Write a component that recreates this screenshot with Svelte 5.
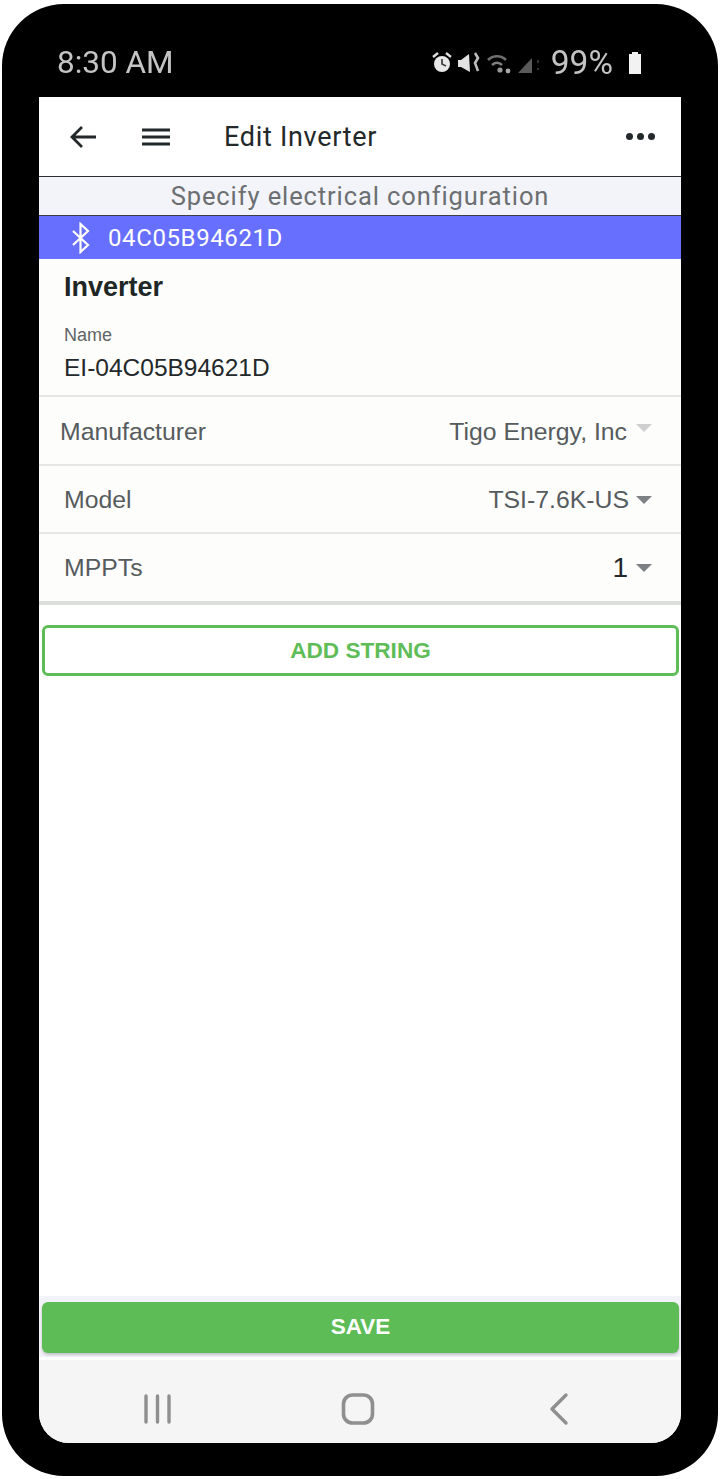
<script>
  const rows = [
    { label: 'Manufacturer', value: 'Tigo Energy, Inc', cls: 'maker' },
    { label: 'Model', value: 'TSI-7.6K-US', cls: 'model' },
    { label: 'MPPTs', value: '1', cls: 'mppts' }
  ];
</script>

<div class="phone">
  <div class="status">
    <span class="time">8:30 AM</span>
    <div class="status-right">
      <svg class="sicons" width="108" height="26" viewBox="0 0 108 26">
        <!-- alarm -->
        <circle cx="10" cy="14" r="8" fill="#e8e8e8" />
        <path d="M10 9v5l4 2" stroke="#444" stroke-width="1.800" fill="none" />
        <path d="M1 7l5-4M19 7l-5-4" stroke="#ddd" stroke-width="2.400" />
        <!-- mute -->
        <path d="M26 10h3l8-6 1 18-9-5h-3z" fill="#e2e2e2" />
        <path d="M43 3l3 5-3 5 3 8" stroke="#bbb" stroke-width="2.600" fill="none" />
        <!-- wifi -->
        <path d="M56 10c5-5 13-5 18 0" stroke="#6e6e6e" stroke-width="2.600" fill="none" />
        <path d="M60 15c3-3 7-3 10 0" stroke="#808080" stroke-width="2.600" fill="none" />
        <circle cx="68" cy="20" r="2.600" fill="#999" />
        <circle cx="76" cy="21" r="2.400" fill="#a8a8a8" />
        <!-- signal -->
        <path d="M86 23l14-15v15z" fill="#5a5a5a" />
        <path d="M106 10v3M106 18v2" stroke="#333" stroke-width="2" />
      </svg>
      <span class="pct">99%</span>
      <svg class="batt" width="16" height="24" viewBox="0 0 16 24">
        <path d="M5 1h6v2h3v20H2V3h3z" fill="#f2f2f2" />
      </svg>
    </div>
  </div>

  <div class="screen">
    <header class="topbar">
      <svg class="back" width="30" height="26" viewBox="0 0 30 26">
        <path d="M28 13H4M14 3L4 13l10 10" stroke="#23282a" stroke-width="2.800" fill="none" />
      </svg>
      <svg class="menu" width="30" height="20" viewBox="0 0 30 20">
        <path d="M1 3h28M1 10h28M1 17h28" stroke="#23282a" stroke-width="2.800" />
      </svg>
      <span class="title">Edit Inverter</span>
      <div class="dots"><i></i><i></i><i></i></div>
    </header>

    <div class="subtitle">Specify electrical configuration</div>

    <div class="device">
      <svg width="20" height="32" viewBox="0 0 20 32">
        <path d="M2 9l15 14-7.500 7V2L17 9 2 23" stroke="#fff" stroke-width="2.200" fill="none" />
      </svg>
      <span>04C05B94621D</span>
    </div>

    <section class="inverter">
      <h2>Inverter</h2>
      <div class="name-label">Name</div>
      <div class="name-value">EI-04C05B94621D</div>
    </section>

    {#each rows as row}
      <div class="row {row.cls}">
        <span class="row-label">{row.label}</span>
        <span class="row-value">{row.value}</span>
        <span class="caret"></span>
      </div>
    {/each}

    <div class="body">
      <button class="add">ADD STRING</button>
    </div>

    <div class="footer">
      <button class="save">SAVE</button>
    </div>

    <nav class="navbar">
      <svg width="32" height="32" viewBox="0 0 32 32">
        <path d="M4 3v26M15.500 3v26M27 3v26" stroke="#8f8f8f" stroke-width="3.400" stroke-linecap="round" />
      </svg>
      <svg class="home" width="34" height="34" viewBox="0 0 34 34">
        <rect x="2.500" y="3" width="29" height="28" rx="9" stroke="#8f8f8f" stroke-width="3.600" fill="none" />
      </svg>
      <svg width="22" height="34" viewBox="0 0 22 34">
        <path d="M18 3L4 17l14 14" stroke="#8f8f8f" stroke-width="3.400" stroke-linecap="round" stroke-linejoin="round" fill="none" />
      </svg>
    </nav>
  </div>
</div>

<style>
  :global(body) { margin: 0; background: #fff; }

  .phone {
    box-sizing: border-box;
    width: 716px;
    height: 1472px;
    margin: 4px 0 0 2px;
    padding: 0 37px 33px 37px;
    background: #000;
    border-radius: 62px;
    display: flex;
    flex-direction: column;
    font-family: "Liberation Sans", sans-serif;
  }

  .status {
    flex: 0 0 93px;
    display: flex;
    align-items: center;
    justify-content: space-between;
    padding: 24px 38px 0 18px;
    box-sizing: border-box;
    color: #c4c4c4;
    filter: blur(.5px);
  }
  .time { font: 400 31.500px Roboto, sans-serif; }
  .status-right { display: flex; align-items: center; }
  .sicons { margin-right: 11px; }
  .pct { font: 400 33.500px Roboto, sans-serif; margin-right: 14px; }

  .screen {
    flex: 1;
    background: #fff;
    border-radius: 0 0 30px 30px;
    overflow: hidden;
    display: flex;
    flex-direction: column;
  }

  .topbar {
    flex: 0 0 80px;
    box-sizing: border-box;
    border-bottom: 1px solid #2a2f31;
    display: flex;
    align-items: center;
    padding: 0 26px 0 29px;
  }
  .menu { margin-left: 43px; }
  .title {
    margin-left: 53px;
    font: 400 27px Roboto, sans-serif;
    letter-spacing: .7px;
    color: #23282a;
  }
  .dots { margin-left: auto; display: flex; gap: 4px; }
  .dots i { width: 7px; height: 7px; border-radius: 50%; background: #23282a; }

  .subtitle {
    flex: 0 0 39px;
    box-sizing: border-box;
    border-bottom: 1.500px solid #3a3f48;
    background: #f2f4f9;
    color: #6c6f72;
    text-align: center;
    font: 400 25.500px/38px Roboto, sans-serif;
    letter-spacing: .9px;
  }

  .device {
    flex: 0 0 43px;
    background: #676ffe;
    color: #fff;
    display: flex;
    align-items: center;
    padding-left: 32px;
    gap: 17px;
    font: 400 24px Roboto, sans-serif;
    letter-spacing: .6px;
    box-shadow: 0 2px 3px rgba(0, 0, 0, .12);
  }

  .inverter {
    flex: 0 0 138px;
    box-sizing: border-box;
    padding: 12px 25px 0;
    background: #fdfdfb;
    border-bottom: 2px solid #e6e7e5;
  }
  h2 {
    margin: 0;
    font: 700 27px/32px "Liberation Sans", sans-serif;
    color: #202625;
  }
  .name-label {
    margin-top: 22px;
    font: 400 18px/20px "Liberation Sans", sans-serif;
    color: #5f6466;
  }
  .name-value {
    margin-top: 10px;
    font: 400 24.500px/26px "Liberation Sans", sans-serif;
    color: #23282a;
  }

  .row {
    flex: 0 0 69px;
    box-sizing: border-box;
    display: flex;
    align-items: center;
    padding: 0 29px 0 25px;
    background: #fdfdfb;
    border-bottom: 2px solid #e6e7e5;
    color: #565b5e;
    font: 400 24.800px "Liberation Sans", sans-serif;
  }
  .row-label { margin-right: auto; }
  .row-value { margin-right: 7px; }
  .maker { padding-top: 3px; }
  .maker .row-label { margin-left: -4px; }
  .maker .row-value { margin-right: 9px; }
  .maker .caret { border-top-color: #cfcfcf; transform: translateY(-4px); }
  .model { flex-basis: 68px; padding-top: 1px; }
  .mppts { flex-basis: 71px; border-bottom: 4px solid #dcdedb; padding-top: 1px; }
  .mppts .row-value { color: #23282a; font-size: 28px; margin-right: 8px; }
  .caret {
    width: 0;
    height: 0;
    border-left: 8px solid transparent;
    border-right: 8px solid transparent;
    border-top: 8px solid #7d8183;
  }

  .body { flex: 1; padding: 20px 2px 0 3px; }
  .add {
    display: block;
    width: 100%;
    height: 51px;
    background: #fff;
    border: 3px solid #5fbd58;
    border-radius: 6px;
    color: #5fbd58;
    font: 700 22.600px "Liberation Sans", sans-serif;
    cursor: pointer;
  }

  .footer {
    flex: 0 0 61px;
    box-sizing: border-box;
    padding: 6px 2px 0 3px;
    background: #f1f3f8;
  }
  .save {
    display: block;
    width: 100%;
    height: 51px;
    padding-bottom: 3px;
    background: #5dbc56;
    border: 0;
    border-radius: 6px;
    color: #fff;
    font: 700 22.500px "Liberation Sans", sans-serif;
    box-shadow: 0 2px 3px rgba(0, 0, 0, .2);
    cursor: pointer;
  }

  .navbar {
    flex: 0 0 86px;
    box-sizing: border-box;
    border-top: 3px solid #fff;
    background: #f5f5f5;
    display: flex;
    align-items: center;
    padding: 14px 111px 0 103px;
    justify-content: space-between;
  }
  .home { margin-right: 6px; }
</style>
